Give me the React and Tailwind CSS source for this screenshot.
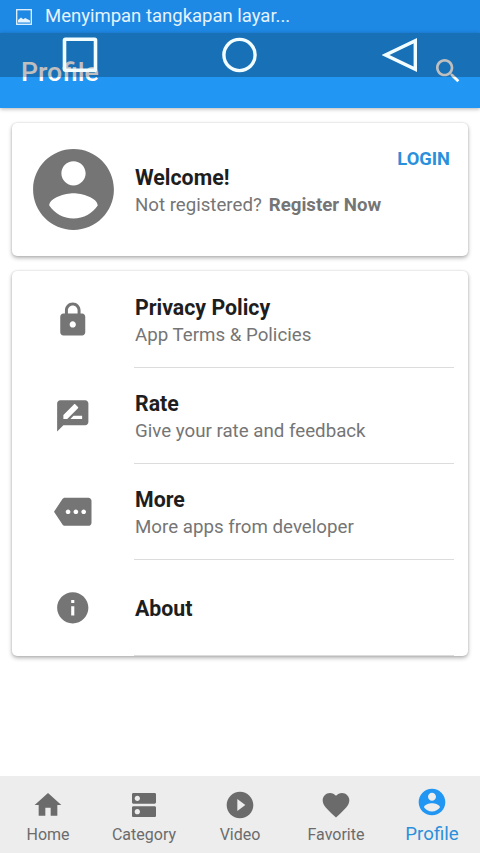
import React from 'react';

const paths = {
  account: "M12 2C6.48 2 2 6.48 2 12s4.48 10 10 10 10-4.48 10-10S17.52 2 12 2zm0 3c1.66 0 3 1.34 3 3s-1.34 3-3 3-3-1.34-3-3 1.34-3 3-3zm0 14.2c-2.5 0-4.71-1.28-6-3.22.03-1.99 4-3.08 6-3.08 1.99 0 5.97 1.09 6 3.08-1.29 1.94-3.5 3.22-6 3.22z",
  lock: "M18 8h-1V6c0-2.76-2.24-5-5-5S7 3.24 7 6v2H6c-1.1 0-2 .9-2 2v10c0 1.1.9 2 2 2h12c1.1 0 2-.9 2-2V10c0-1.1-.9-2-2-2zm-6 9c-1.1 0-2-.9-2-2s.9-2 2-2 2 .9 2 2-.9 2-2 2zm3.1-9H8.9V6c0-1.71 1.39-3.1 3.1-3.1 1.71 0 3.1 1.39 3.1 3.1v2z",
  rate: "M20 2H4c-1.1 0-1.99.9-1.99 2L2 22l4-4h14c1.1 0 2-.9 2-2V4c0-1.1-.9-2-2-2zM6 14v-2.47l6.88-6.88c.2-.2.51-.2.71 0l1.77 1.77c.2.2.2.51 0 .71L8.47 14H6zm12 0h-7.5l2-2H18v2z",
  more: "M22 3H7c-.69 0-1.23.35-1.59.88L0 12l5.41 8.11c.36.53.9.89 1.59.89h15c1.1 0 2-.9 2-2V5c0-1.1-.9-2-2-2zM9 13.5c-.83 0-1.5-.67-1.5-1.5s.67-1.5 1.5-1.5 1.5.67 1.5 1.5-.67 1.5-1.5 1.5zm5 0c-.83 0-1.5-.67-1.5-1.5s.67-1.5 1.5-1.5 1.5.67 1.5 1.5-.67 1.5-1.5 1.5zm5 0c-.83 0-1.5-.67-1.5-1.5s.67-1.5 1.5-1.5 1.5.67 1.5 1.5-.67 1.5-1.5 1.5z",
  info: "M12 2C6.48 2 2 6.48 2 12s4.48 10 10 10 10-4.48 10-10S17.52 2 12 2zm1 15h-2v-6h2v6zm0-8h-2V7h2v2z",
  home: "M10 20v-6h4v6h5v-8h3L12 3 2 12h3v8z",
  category: "M20 13H4c-.55 0-1 .45-1 1v6c0 .55.45 1 1 1h16c.55 0 1-.45 1-1v-6c0-.55-.45-1-1-1zM7 19c-1.1 0-2-.9-2-2s.9-2 2-2 2 .9 2 2-.9 2-2 2zM20 3H4c-.55 0-1 .45-1 1v6c0 .55.45 1 1 1h16c.55 0 1-.45 1-1V4c0-.55-.45-1-1-1zM7 9c-1.1 0-2-.9-2-2s.9-2 2-2 2 .9 2 2-.9 2-2 2z",
  video: "M12 2C6.48 2 2 6.48 2 12s4.48 10 10 10 10-4.48 10-10S17.52 2 12 2zm-2 14.5v-9l6 4.5-6 4.5z",
  heart: "M12 21.35l-1.45-1.32C5.4 15.36 2 12.28 2 8.5 2 5.42 4.42 3 7.5 3c1.74 0 3.41.81 4.5 2.09C13.09 3.81 14.76 3 16.5 3 19.58 3 22 5.42 22 8.5c0 3.78-3.4 6.86-8.55 11.54L12 21.35z",
  search: "M15.5 14h-.79l-.28-.27C15.41 12.59 16 11.11 16 9.5 16 5.91 13.09 3 9.5 3S3 5.91 3 9.5 5.91 16 9.5 16c1.61 0 3.09-.59 4.23-1.57l.27.28v.79l5 4.99L20.49 19l-4.99-5zm-6 0C7.01 14 5 11.99 5 9.5S7.01 5 9.5 5 14 7.01 14 9.5 11.99 14 9.5 14z",
};

const Icon = ({ name, className }) => (
  <svg viewBox="0 0 24 24" fill="currentColor" className={`shrink-0 ${className}`}>
    <path d={paths[name]} />
  </svg>
);

const menu = [
  { icon: 'lock', title: 'Privacy Policy', text: 'App Terms & Policies' },
  { icon: 'rate', title: 'Rate', text: 'Give your rate and feedback' },
  { icon: 'more', title: 'More', text: 'More apps from developer' },
  { icon: 'info', title: 'About' },
];

const tabs = [
  { icon: 'home', label: 'Home' },
  { icon: 'category', label: 'Category' },
  { icon: 'video', label: 'Video' },
  { icon: 'heart', label: 'Favorite' },
  { icon: 'account', label: 'Profile', active: true },
];

const StatusBar = () => (
  <div className="flex h-[33px] items-center bg-[#1e88e5] pl-4 text-[#e4f3fd]">
    <svg viewBox="0 0 16 16" className="h-4 w-4">
      <rect x="0.7" y="0.7" width="14.6" height="14.6" fill="none" stroke="currentColor" strokeWidth="1.3" />
      <path d="M2 13.5V11l3-2.5 2.2 1.8 2-1.3 4.8 2.5v2z" fill="currentColor" />
    </svg>
    <span className="ml-[13px] text-[18.5px] leading-[33px]">Menyimpan tangkapan layar...</span>
  </div>
);

// System keys float over the top half of the toolbar
const SystemKeys = () => (
  <div className="absolute inset-x-0 top-0 flex h-11 items-center justify-between bg-black/25 pl-[62px] pr-[62px] text-[#f2fdff]">
    <svg viewBox="0 0 36 36" className="h-9 w-9" fill="none" stroke="currentColor" strokeWidth="3.6">
      <rect x="2.5" y="2.3" width="31" height="31" rx="0.8" />
    </svg>
    <svg viewBox="0 0 36 36" className="h-9 w-9" fill="none" stroke="currentColor" strokeWidth="3.4">
      <circle cx="17.5" cy="18" r="15.6" />
    </svg>
    <svg viewBox="0 0 36 36" className="h-9 w-9" fill="none" stroke="currentColor" strokeWidth="3.4">
      <path d="M33.3 3.6v28.8L3.6 18z" />
    </svg>
  </div>
);

const Toolbar = () => (
  <div className="relative flex h-[75px] items-center justify-between bg-[#2196f3] pl-[21px] pr-4 text-white shadow-[0_1px_4px_rgba(0,0,0,0.3)]">
    <h1 className="mt-[3px] text-[26.67px] font-medium leading-8">Profile</h1>
    <Icon name="search" className="h-8 w-8" />
    <SystemKeys />
  </div>
);

export default function App() {
  return (
    <div className="flex h-[853px] w-[480px] flex-col overflow-hidden bg-white font-['Roboto',sans-serif] text-[#757575]">
      <StatusBar />
      <Toolbar />

      <main className="flex flex-1 flex-col gap-[15px] px-3 pt-[15px]">
        <section className="flex h-[133px] rounded-[5px] bg-white pl-[13px] pr-[18px] shadow-[0_2px_4px_rgba(0,0,0,0.3),0_0_2px_rgba(0,0,0,0.15)]">
          <Icon name="account" className="mt-[18px] h-[97px] w-[97px]" />
          <div className="ml-[13px] mt-[42px] flex-1 whitespace-nowrap">
            <h2 className="text-[21.33px] font-bold leading-[26px] text-[#1e1e1e]">Welcome!</h2>
            <p className="text-[18.67px] leading-[29px]">
              Not registered?<span className="ml-[7px] font-bold">Register Now</span>
            </p>
          </div>
          <button className="mt-[24px] h-[24px] text-[18.3px] font-bold leading-[24px] text-[#2b90dc]">LOGIN</button>
        </section>

        <section className="h-[385px] rounded-[5px] bg-white pr-[14px] pt-px shadow-[0_2px_4px_rgba(0,0,0,0.3),0_0_2px_rgba(0,0,0,0.15)]">
          {menu.map((item) => (
            <div key={item.title} className="flex h-24 items-center">
              <Icon name={item.icon} className="ml-[42px] -mt-px h-[37.5px] w-[37.5px]" />
              <div
                className={`ml-[42.5px] flex h-24 flex-1 flex-col justify-center border-b border-[#dcdcdc] pl-px ${
                  item.text ? 'pt-[5px]' : 'pt-[3px]'
                }`}
              >
                <h2 className="text-[21.33px] font-bold leading-[26px] text-[#1e1e1e]">{item.title}</h2>
                {item.text && <p className="text-[18.72px] leading-[28px]">{item.text}</p>}
              </div>
            </div>
          ))}
        </section>
      </main>

      <nav className="grid h-[77px] grid-cols-5 bg-[#ededed]">
        {tabs.map(({ icon, label, active }) => (
          <div
            key={label}
            className={`flex flex-col items-center ${active ? 'pt-[10px] text-[#2196f3]' : 'pt-[13px] text-[#6b6b6b]'}`}
          >
            <Icon name={icon} className="h-8 w-8" />
            <span className={active ? 'text-[18.67px] leading-[33px] text-[#2b90dc]' : 'text-base leading-[27px]'}>{label}</span>
          </div>
        ))}
      </nav>
    </div>
  );
}
